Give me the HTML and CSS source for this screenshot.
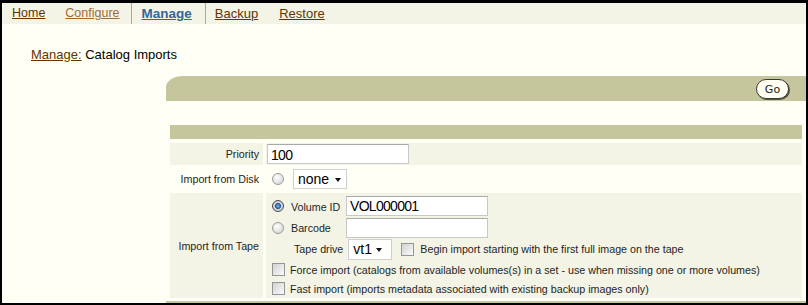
FILE: index.html
```html
<!DOCTYPE html>
<html lang="en">
<head>
    <meta charset="UTF-8">
    <meta name="viewport" content="width=device-width, initial-scale=1.0">
    <title>Catalog Imports</title>
    <link rel="stylesheet" href="styles.css">
</head>
<body>
    <nav class="tabs">
        <a href="#" class="tab">Home</a>
        <a href="#" class="tab visited">Configure</a>
        <a href="#" class="tab current">Manage</a>
        <a href="#" class="tab">Backup</a>
        <a href="#" class="tab">Restore</a>
    </nav>

    <div class="crumbs">
        <a href="#">Manage:</a> Catalog Imports
    </div>

    <main class="content">
        <div class="head-bar">
            <button type="button" class="btn-go">Go</button>
        </div>

        <div class="panel">
            <div class="sub-bar"></div>

            <form class="form">
                <div class="lbl shaded">Priority</div>
                <div class="val shaded">
                    <input type="text" class="txt txt-priority" value="100">
                </div>

                <div class="lbl">Import from Disk</div>
                <div class="val disk">
                    <input type="radio" name="src" class="radio">
                    <span class="select sel-none">
                        <select><option>none</option></select>
                        <span class="caret"></span>
                    </span>
                </div>

                <div class="lbl shaded">Import from Tape</div>
                <div class="val shaded tape">
                    <div class="line l1">
                        <input type="radio" name="src" class="radio" checked>
                        <span class="opt-label">Volume ID</span>
                        <input type="text" class="txt txt-vol" value="VOL000001">
                    </div>
                    <div class="line l2">
                        <input type="radio" name="src" class="radio">
                        <span class="opt-label">Barcode</span>
                        <input type="text" class="txt txt-vol" value="">
                    </div>
                    <div class="line l3">
                        <span class="drive-label">Tape drive</span>
                        <span class="select sel-vt">
                            <select><option>vt1</option></select>
                            <span class="caret"></span>
                        </span>
                        <input type="checkbox" class="check">
                        <span>Begin import starting with the first full image on the tape</span>
                    </div>
                    <div class="line l4">
                        <input type="checkbox" class="check">
                        <span>Force import (catalogs from available volumes(s) in a set - use when missing one or more volumes)</span>
                    </div>
                    <div class="line l5">
                        <input type="checkbox" class="check">
                        <span>Fast import (imports metadata associated with existing backup images only)</span>
                    </div>
                </div>
            </form>
        </div>

        <div class="foot-bar"></div>
    </main>
</body>
</html>
```

FILE: styles.css
```css
html {
    background-color: #000;
}
body {
    margin: 3px 2px 2px 2px;
    height: 300px;
    overflow: hidden;
    background-color: #fffff5;
    font-family: "Liberation Sans", Arial, sans-serif;
    color: #000;
}

/* top tabs */
.tabs {
    display: flex;
    height: 21px;
    background-color: #f3f4e6;
    font-size: 12.5px;
    line-height: 21px;
}
.tab {
    padding: 0 10px;
    color: #663300;
}
.tab.visited {
    color: #a06c35;
    padding-right: 11px;
}
.tab.current {
    color: #336699;
    font-weight: bold;
    font-size: 13.5px;
    border-left: 1px solid #a8a8a0;
    border-right: 1px solid #a8a8a0;
    padding: 0 13px 0 10px;
}
.tab.current + .tab {
    padding-left: 9px;
    padding-right: 11px;
    font-size: 13px;
}
.tab:last-child {
    font-size: 13px;
}

/* breadcrumb */
.crumbs {
    height: 52px;
    box-sizing: border-box;
    padding: 23px 0 0 29px;
    font-size: 13px;
    line-height: 16px;
}
.crumbs a {
    color: #663300;
}

/* content */
.content {
    margin-left: 164px;
}
.head-bar {
    height: 25px;
    background-color: #c5c69e;
    border-top-left-radius: 17px 11px;
    display: flex;
    justify-content: flex-end;
    align-items: center;
    padding-right: 17px;
}
.btn-go {
    width: 33px;
    height: 20px;
    margin-top: 1px;
    padding: 0;
    border: 1px solid #3a3a30;
    border-radius: 10px;
    background-color: #fffff2;
    box-shadow: 1px 1px 0 #55553f;
    font-family: "DejaVu Sans", sans-serif;
    font-size: 11px;
    color: #222;
    cursor: pointer;
}

.panel {
    margin-top: 24px;
    padding: 0 4px;
}
.sub-bar {
    height: 14px;
    background-color: #c5c69e;
}

.form {
    display: grid;
    grid-template-columns: 93px 1fr;
    grid-template-rows: 22px 24px 105px;
    column-gap: 3px;
    row-gap: 2px;
    margin-top: 4px;
    font-size: 10.7px;
    color: #1e1e1e;
}
.shaded {
    background-color: #f3f4e5;
}
.lbl {
    display: flex;
    align-items: center;
    justify-content: flex-end;
    padding-right: 4px;
}
.val {
    display: flex;
    align-items: center;
}

.txt {
    box-sizing: border-box;
    height: 20px;
    margin: 0;
    padding: 1px 3px 0;
    border: 1px solid #c8c8c8;
    border-top-color: #a9a9a9;
    background-color: #fff;
    font-family: "Liberation Sans", Arial, sans-serif;
    font-size: 14px;
    letter-spacing: -0.7px;
    color: #000;
}
.txt-priority {
    width: 142px;
    margin-left: 1px;
}
.txt-vol {
    width: 142px;
}

.radio {
    appearance: none;
    box-sizing: border-box;
    width: 12px;
    height: 12px;
    margin: 0;
    border: 1px solid #9c9c9c;
    border-radius: 50%;
    background: radial-gradient(circle at 40% 35%, #ffffff, #cfcfcf);
}
.radio:checked {
    border-color: #4a4a4a;
    background: radial-gradient(circle, #7fb8ee 0, #1d5fa6 2.6px, #d8d8d8 3.6px, #bdbdbd 100%);
}
.check {
    appearance: none;
    box-sizing: border-box;
    width: 13px;
    height: 13px;
    margin: 0;
    border: 1px solid #959595;
    background: linear-gradient(135deg, #d2d2d2, #fbfbfb);
}

.select {
    position: relative;
    display: inline-flex;
    align-items: center;
    box-sizing: border-box;
    height: 20px;
    border: 1px solid #cfcfcf;
    background-color: #fff;
}
.select select {
    appearance: none;
    border: none;
    background: transparent;
    padding: 0 0 0 4px;
    font-family: "Liberation Sans", Arial, sans-serif;
    font-size: 14px;
    color: #000;
    width: 100%;
}
.caret {
    position: absolute;
    top: 8px;
    border-left: 3.5px solid transparent;
    border-right: 3.5px solid transparent;
    border-top: 4px solid #111;
    pointer-events: none;
}
.sel-none {
    width: 54px;
    margin-left: 9px;
}
.sel-none .caret {
    right: 5px;
}
.sel-vt {
    width: 44px;
    height: 21px;
    margin-left: 5px;
}
.sel-vt .caret {
    right: 9px;
}

.disk .radio {
    margin-left: 6px;
}

.tape {
    flex-direction: column;
    align-items: stretch;
    padding-top: 1px;
    box-sizing: border-box;
}
.line {
    display: flex;
    align-items: center;
}
.l1 { height: 23px; }
.l2 { height: 21px; }
.l3 { height: 22px; }
.l4 { height: 19px; }
.l5 { height: 19px; }

.line .radio {
    margin-left: 6px;
}
.opt-label {
    width: 55px;
    margin-left: 7px;
}
.l1 .opt-label {
    padding-top: 2px;
}
.drive-label {
    margin-left: 28px;
}
.l3 .check {
    margin: 0 6px 0 9px;
}
.l4 .check,
.l5 .check {
    margin: 0 5px 0 6px;
}

.foot-bar {
    margin-top: 3px;
    height: 20px;
    background-color: #c5c69e;
}
```
